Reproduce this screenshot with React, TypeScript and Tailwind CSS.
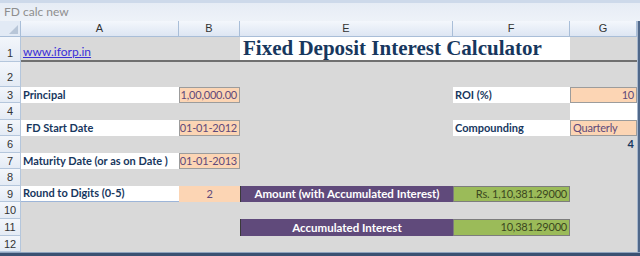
import React from 'react';

const W = {
  a: 'w-[158px]',
  b: 'w-[61px]',
  e: 'w-[213px]',
  f: 'w-[117px]',
  g: 'w-[67px]',
};

const label = "font-['Lato',sans-serif] text-[11px] font-bold text-[#17375E]";
const orangeText = "bg-[#FCD5B4] font-['Lato',sans-serif] text-[11px] tracking-[-0.2px] text-[#60497A] px-[2px]";
const orange = `${orangeText} border border-[#9c9c9c]`;
const purple =
  "bg-[#604A7B] justify-center border-l border-[#3a3a3a] font-['Lato',sans-serif] font-bold text-[11.5px] text-white";
const green =
  "bg-[#9BBB59] justify-end pr-[2px] border border-[#7d7d7d] font-['Lato',sans-serif] text-[11px] tracking-[-0.2px] text-[#3B4820]";

const Row = ({ n, h, pad, children }: { n: number; h: string; pad?: string; children?: React.ReactNode }) => (
  <div className={`flex ${h}`}>
    <div
      className={`w-[21px] shrink-0 flex justify-center bg-gradient-to-b from-[#F3F6FB] to-[#E4EBF5] border-r border-b border-[#B4C6DC] font-['Liberation_Sans',sans-serif] text-[11px] leading-[12px] text-[#333] ${
        pad ?? 'items-center'
      }`}
    >
      {n}
    </div>
    <div className="flex flex-1 items-stretch bg-[#D9D9D9]">{children}</div>
  </div>
);

const Cell = ({ w, className = '', children }: { w: string; className?: string; children?: React.ReactNode }) => (
  <div className={`${w} shrink-0 flex items-center overflow-hidden whitespace-nowrap ${className}`}>{children}</div>
);

const HeaderCell = ({ w, children }: { w: string; children: React.ReactNode }) => (
  <div className={`${w} shrink-0 flex items-center justify-center border-r border-[#A9BED8] font-['Liberation_Sans',sans-serif] text-[11px] text-[#333]`}>
    {children}
  </div>
);

export default function App() {
  return (
    <div className="w-[640px] h-[256px] overflow-hidden flex flex-col bg-[#DFE7F2]">
      {/* title bar */}
      <div className="h-[21px] shrink-0 flex flex-col">
        <div className="h-[3px] bg-[#CDD9EA]" />
        <div className="flex-1 flex items-center pl-[4px] bg-gradient-to-b from-[#E6ECF5] to-[#EEF2F8] font-['Lato',sans-serif] text-[12px] text-[#8E8E8E]">
          FD calc new
        </div>
      </div>

      <div className="flex flex-1">
        <div className="w-[637px] flex flex-col">
          {/* column headers */}
          <div className="h-[16px] flex bg-gradient-to-b from-[#F4F7FC] to-[#DDE6F3] border-b border-[#A9BED8]">
            <div className="w-[21px] shrink-0 relative border-r border-[#A9BED8] bg-[#E2EAF5]">
              <div className="absolute right-[2px] bottom-[2px] w-0 h-0 border-l-[9px] border-l-transparent border-b-[9px] border-b-[#B8C6D8]" />
            </div>
            <HeaderCell w={W.a}>A</HeaderCell>
            <HeaderCell w={W.b}>B</HeaderCell>
            <HeaderCell w={W.e}>E</HeaderCell>
            <HeaderCell w={W.f}>F</HeaderCell>
            <HeaderCell w={W.g}>G</HeaderCell>
          </div>

          {/* row 1 */}
          <div className="flex h-[25px]">
            <div className="w-[21px] shrink-0 flex items-end justify-center pb-[2px] bg-gradient-to-b from-[#F3F6FB] to-[#E4EBF5] border-r border-b border-[#B4C6DC] font-['Liberation_Sans',sans-serif] text-[11px] leading-[12px] text-[#333]">
              1
            </div>
            <div className="flex flex-1 bg-[#D9D9D9] border-b-2 border-[#707070]">
              <div className="w-[158px] shrink-0 flex items-end pl-[2px] pb-[1px]">
                <a className="font-['Lato',sans-serif] text-[12px] leading-[14px] text-[#3A2FD8] underline">www.iforp.in</a>
              </div>
              <div className="w-[61px] shrink-0" />
              <div className="w-[330px] shrink-0 bg-white flex items-end pl-[3px] pb-[1px] font-['Liberation_Serif',serif] font-bold text-[21px] leading-[22px] text-[#17375E]">
                Fixed Deposit Interest Calculator
              </div>
              <div className="w-[67px] shrink-0" />
            </div>
          </div>

          <Row n={2} h="h-[25px]" pad="items-end pb-[3px]" />

          <Row n={3} h="h-[16px]">
            <Cell w={W.a} className={`bg-white pl-[2px] ${label}`}>Principal</Cell>
            <Cell w={W.b} className={`${orange} justify-end`}>1,00,000.00</Cell>
            <Cell w={W.e} />
            <Cell w={W.f} className={`bg-white pl-[2px] ${label}`}>ROI (%)</Cell>
            <Cell w={W.g} className={`${orange} justify-end`}>10</Cell>
          </Row>

          <Row n={4} h="h-[17px]">
            <Cell w={W.a} />
            <Cell w={W.b} />
            <Cell w={W.e} />
            <Cell w={W.f} />
            <Cell w={W.g} className="bg-white" />
          </Row>

          <Row n={5} h="h-[16px]">
            <Cell w={W.a} className={`bg-white pl-[5px] ${label}`}>FD Start Date</Cell>
            <Cell w={W.b} className={`${orange} justify-end`}>01-01-2012</Cell>
            <Cell w={W.e} />
            <Cell w={W.f} className={`bg-white pl-[2px] ${label}`}>Compounding</Cell>
            <Cell w={W.g} className={orange}>Quarterly</Cell>
          </Row>

          <Row n={6} h="h-[17px]">
            <Cell w={W.a} />
            <Cell w={W.b} />
            <Cell w={W.e} />
            <Cell w={W.f} />
            <Cell w={W.g} className={`justify-end pr-[3px] ${label}`}>4</Cell>
          </Row>

          <Row n={7} h="h-[16px]">
            <Cell w={W.a} className={`bg-white pl-[2px] ${label}`}>Maturity Date (or as on Date )</Cell>
            <Cell w={W.b} className={`${orange} justify-end`}>01-01-2013</Cell>
          </Row>

          <Row n={8} h="h-[17px]" />

          <Row n={9} h="h-[16px]">
            <Cell w={W.a} className={`bg-white pl-[2px] border-b border-[#9DB5D8] ${label}`}>Round to Digits (0-5)</Cell>
            <Cell w={W.b} className={`${orangeText} justify-center`}>2</Cell>
            <Cell w={W.e} className={purple}>Amount (with Accumulated Interest)</Cell>
            <Cell w={W.f} className={green}>Rs. 1,10,381.29000</Cell>
          </Row>

          <Row n={10} h="h-[17px]" />

          <Row n={11} h="h-[17px]">
            <Cell w={W.a} />
            <Cell w={W.b} />
            <Cell w={W.e} className={purple}>Accumulated Interest</Cell>
            <Cell w={W.f} className={green}>10,381.29000</Cell>
          </Row>

          <Row n={12} h="h-[16px]" />
        </div>
        <div className="w-[3px] flex">
          <div className="w-[1px] bg-[#A8B8CE]" />
          <div className="w-[2px] bg-[#50688A]" />
        </div>
      </div>

      {/* bottom edge */}
      <div className="h-[4px] shrink-0 flex flex-col">
        <div className="h-[1px] bg-[#8FA3BE]" />
        <div className="flex-1 bg-[#3B5172]" />
      </div>
    </div>
  );
}
